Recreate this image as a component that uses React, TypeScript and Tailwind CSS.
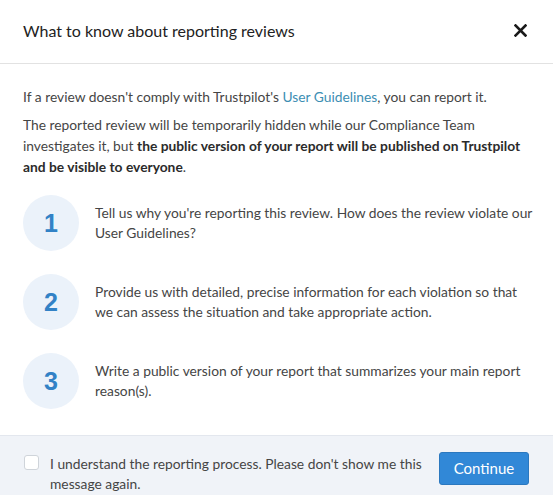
import React from "react";

const steps = [
  "Tell us why you're reporting this review. How does the review violate our User Guidelines?",
  "Provide us with detailed, precise information for each violation so that we can assess the situation and take appropriate action.",
  "Write a public version of your report that summarizes your main report reason(s).",
];

export default function App() {
  return (
    <div
      className="w-[553px] h-[495px] bg-white flex flex-col text-[#454545] overflow-hidden"
      style={{ fontFamily: "Lato, 'Noto Sans', sans-serif" }}
    >
      {/* Header */}
      <div className="h-[64px] flex items-center justify-between pl-[23px] pr-[24px] border-b border-[#e2e2e2] shrink-0">
        <h2 className="text-[16px] text-[#222] font-normal -mt-[2px]">What to know about reporting reviews</h2>
        <svg width="13" height="13" viewBox="0 0 13 13" className="mr-[2px] -mt-[2px]">
          <path d="M1.5 1.5 L11.5 11.5 M11.5 1.5 L1.5 11.5" stroke="#1a1a1a" strokeWidth="2.6" strokeLinecap="square" />
        </svg>
      </div>

      {/* Body */}
      <div className="flex-1 pl-[23px] pr-[18px] pt-[22px] text-[13.8px] leading-[21px]">
        <p>
          If a review doesn't comply with Trustpilot's{" "}
          <a className="text-[#3c8eb3]">User Guidelines</a>, you can report it.
        </p>
        <p className="mt-[7px]">
          The reported review will be temporarily hidden while our Compliance Team investigates it, but{" "}
          <strong className="font-bold text-[#2b2b2b]">
            the public version of your report will be published on Trustpilot and be visible to everyone
          </strong>
          .
        </p>

        <div className="mt-[18px] flex flex-col gap-[23px]">
          {steps.map((text, i) => (
            <div key={i} className="flex items-center gap-[16px]">
              <div
                className="w-[56px] h-[56px] rounded-full bg-[#ebf2fa] flex items-center justify-center shrink-0 text-[25px] font-bold text-[#3282c6]"
                style={{ fontFamily: "'Liberation Sans', Arial, sans-serif" }}
              >
                {i + 1}
              </div>
              <p className="leading-[20px]">{text}</p>
            </div>
          ))}
        </div>
      </div>

      {/* Footer */}
      <div className="h-[60px] shrink-0 bg-[#f0f3f8] border-t border-[#e3e7ee] flex items-start justify-between pl-[24px] pr-[24px] pt-[16px]">
        <label className="flex items-start gap-[11px] mt-[2px]">
          <span className="mt-[1px] w-[15px] h-[15px] rounded-[3px] bg-white border border-[#cfd4da] shrink-0" />
          <span className="text-[13.8px] leading-[20px] w-[376px]">
            I understand the reporting process. Please don't show me this message again.
          </span>
        </label>
        <button className="w-[90px] h-[33px] rounded-[3px] bg-[#3188d7] border border-[#2b78bf] text-white text-[15px]">
          Continue
        </button>
      </div>
    </div>
  );
}
